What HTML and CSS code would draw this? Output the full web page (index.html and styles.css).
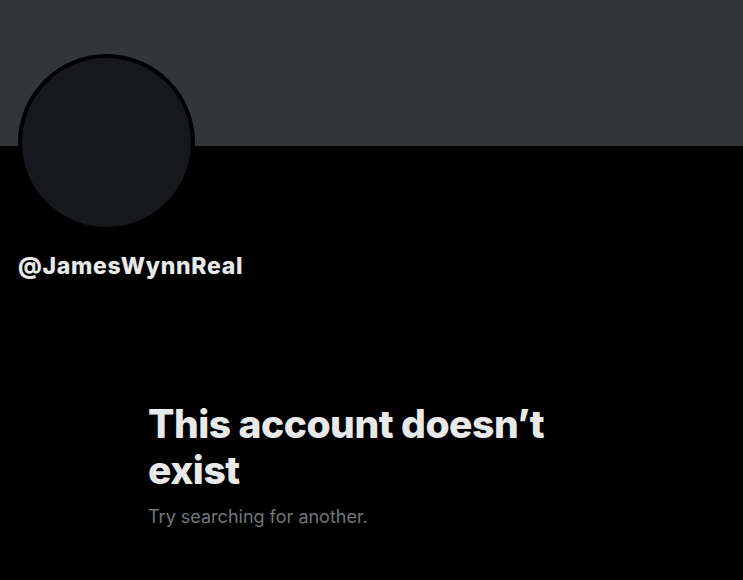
FILE: index.html
```html
<!DOCTYPE html>
<html>
<head>
<meta charset="utf-8">
<link rel="stylesheet" href="styles.css">
</head>
<body>
<div class="banner"></div>
<div class="profile">
  <div class="avatar"></div>
  <div class="handle">@JamesWynnReal</div>
</div>
<div class="empty">
  <h1 class="empty-title">This account doesn’t exist</h1>
  <p class="empty-sub">Try searching for another.</p>
</div>
</body>
</html>
```
FILE: styles.css
```css
html, body {
  margin: 0;
  padding: 0;
  background: #000;
  height: 100%;
  overflow: hidden;
}
body {
  font-family: Inter, "Noto Sans", sans-serif;
  color: #e7e9ea;
}
.banner {
  height: 146px;
  background: #333639;
}
.profile {
  padding-left: 18px;
}
.avatar {
  width: 169px;
  height: 169px;
  border: 4px solid #000;
  border-radius: 50%;
  background: #16181c;
  margin-top: -92px;
}
.handle {
  margin-top: 21px;
  font-size: 23px;
  font-weight: 800;
  line-height: 28px;
  letter-spacing: 0.7px;
}
.empty {
  padding: 121px 0 0 148px;
  width: 420px;
}
.empty-title {
  margin: 0;
  font-size: 39px;
  font-weight: 800;
  line-height: 46px;
  letter-spacing: -0.5px;
}
.empty-sub {
  margin: 12px 0 0;
  font-size: 18px;
  line-height: 24px;
  color: #71767b;
}
```
